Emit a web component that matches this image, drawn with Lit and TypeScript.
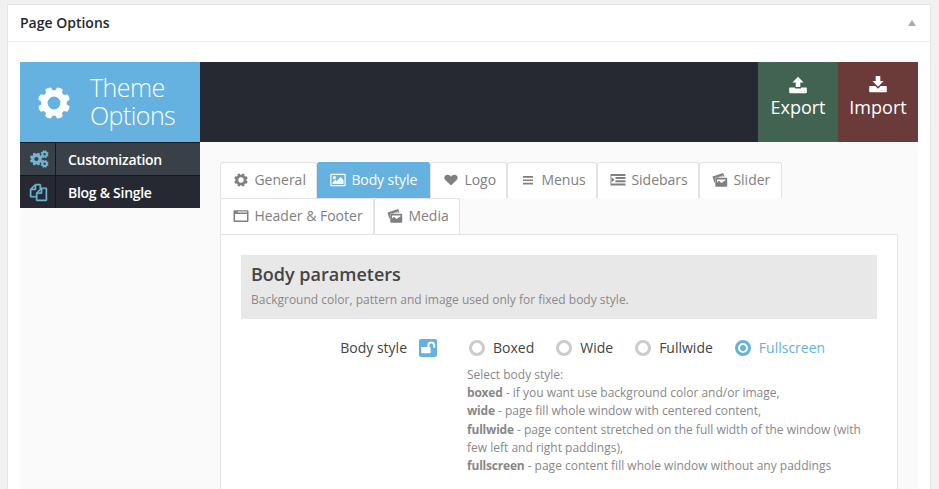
import { LitElement, html, svg, css, type SVGTemplateResult } from "lit";
import { customElement, property, state } from "lit/decorators.js";
import { classMap } from "lit/directives/class-map.js";

/** Ring-shaped gear outline with eight rounded teeth. */
function gear(cx: number, cy: number, outer: number, root: number, hole: number, teeth = 8): string {
  const step = (Math.PI * 2) / teeth;
  const pt = (r: number, a: number) => `${(cx + r * Math.cos(a)).toFixed(2)} ${(cy + r * Math.sin(a)).toFixed(2)}`;
  let d = "";
  for (let i = 0; i < teeth; i++) {
    const a = (i + 0.5) * step;
    d += `${i ? "L" : "M"}${pt(root, a - step * 0.36)}L${pt(outer * 0.97, a - step * 0.24)}`;
    d += `Q${pt(outer * 1.03, a)} ${pt(outer * 0.97, a + step * 0.24)}L${pt(root, a + step * 0.36)}`;
  }
  return `${d}ZM${cx + hole} ${cy}A${hole} ${hole} 0 1 0 ${cx - hole} ${cy}A${hole} ${hole} 0 1 0 ${cx + hole} ${cy}Z`;
}

const icons: Record<string, { box: string; body: SVGTemplateResult }> = {
  cog: { box: "0 0 32 32", body: svg`<path fill-rule="evenodd" d=${gear(16, 16, 16.4, 12.8, 6.4)} />` },
  cogSmall: { box: "0 0 16 16", body: svg`<path fill-rule="evenodd" d=${gear(8, 8, 6.9, 5.4, 2.7)} />` },
  cogs: {
    box: "0 0 18 18",
    body: svg`<path fill-rule="evenodd" d=${gear(6.4, 9, 6.7, 5.2, 2.1)} />
      <path fill-rule="evenodd" d=${gear(14.6, 4.2, 4.1, 3.1, 1.2)} />
      <path fill-rule="evenodd" d=${gear(14.6, 13.8, 4.1, 3.1, 1.2)} />`,
  },
  files: {
    box: "0 0 1792 1792",
    body: svg`<path stroke="currentColor" stroke-width="50" d="M1696 384q40 0 68 28t28 68v1216q0 40-28 68t-68 28h-960q-40 0-68-28t-28-68v-288h-544q-40 0-68-28t-28-68v-672q0-40 20-88t48-76l408-408q28-28 76-48t88-20h416q40 0 68 28t28 68v328q68-40 128-40h416zm-544 213l-299 299h299v-299zm-640-384l-299 299h299v-299zm196 647l316-316v-416h-384v416q0 40-28 68t-68 28h-416v640h512v-256q0-40 20-88t48-76zm956 804v-1152h-384v416q0 40-28 68t-68 28h-416v640h896z" />`,
  },
  upload: {
    box: "0 0 18 18",
    body: svg`<path d="M9 .7 14.6 6.4H11.3V11H6.7V6.4H3.4Z" />
      <path fill-rule="evenodd" d="M1 11.4H5.6Q6.2 12.6 7.3 12.6H10.7Q11.8 12.6 12.4 11.4H17Q17.8 11.4 17.8 12.2V16.5Q17.8 17.3 17 17.3H1Q.2 17.3 .2 16.5V12.2Q.2 11.4 1 11.4ZM12.4 15V15.6H13.1V15ZM15 15V15.6H15.7V15Z" />`,
  },
  download: {
    box: "0 0 18 18",
    body: svg`<path d="M6.7 0H11.3V4.9H14.6L9 10.7 3.4 4.9H6.7Z" />
      <path fill-rule="evenodd" d="M1 10.1H6.3L9 12.7 11.7 10.1H17Q17.8 10.1 17.8 10.9V15.4Q17.8 16.2 17 16.2H1Q.2 16.2 .2 15.4V10.9Q.2 10.1 1 10.1ZM12.4 13.9V14.5H13.1V13.9ZM15 13.9V14.5H15.7V13.9Z" />`,
  },
  picture: {
    box: "0 0 16 16",
    body: svg`<path fill-rule="evenodd" d="M1.3 1.8H14.7Q15.7 1.8 15.7 2.8V13.2Q15.7 14.2 14.7 14.2H1.3Q.3 14.2 .3 13.2V2.8Q.3 1.8 1.3 1.8ZM1.5 3V13H14.5V3Z" />
      <circle cx="4.4" cy="5.7" r="1.6" /><path d="M2.6 12V10.2L5.1 7.8 6.7 9.3 10.5 5 13.5 8.2V12Z" />`,
  },
  heart: {
    box: "0 0 16 16",
    body: svg`<path d="M8 13.6 2.3 8.1C.4 6 1.5 2.9 4.3 2.7 6 2.6 7.3 3.5 8 4.7 8.7 3.5 10 2.6 11.7 2.7 14.5 2.9 15.6 6 13.7 8.1Z" />`,
  },
  menu: { box: "0 0 16 16", body: svg`<path d="M3 4H13V5.7H3ZM3 7.4H13V9.1H3ZM3 10.8H13V12.5H3Z" />` },
  indent: {
    box: "0 0 16 16",
    body: svg`<path d="M.5 2H15.5V4H.5ZM5.5 5.1H15.5V7.1H5.5ZM5.5 8.3H15.5V10.3H5.5ZM.5 11.5H15.5V13.5H.5ZM.5 4H1.3V11.5H.5ZM1.6 5.2 4.6 7.7 1.6 10.2Z" />`,
  },
  photos: {
    box: "0 0 16 16",
    body: svg`<path d="M.5 4.5 11.3 1 12.4 4.6H11L10.3 2.9 5 4.6 4 5.6 2.9 6.2 3 8.1V11.3L2 9.4Z" />
      <path d="M5 3.6 10 2.2 10.6 4.4H7.6L6.9 5.6H4Z" />
      <path fill-rule="evenodd" d="M4 5.8H14.5Q15.2 5.8 15.2 6.5V13.9Q15.2 14.7 14.5 14.7H4Q3.3 14.7 3.3 13.9V6.5Q3.3 5.8 4 5.8ZM5 7.4V10.4L7 8.8 9.4 11 13.5 8.3V7.4Z" />`,
  },
  window: {
    box: "0 0 16 16",
    body: svg`<path fill-rule="evenodd" d="M1.5 2.2H14.5Q15.5 2.2 15.5 3.2V13Q15.5 14 14.5 14H1.5Q.5 14 .5 13V3.2Q.5 2.2 1.5 2.2ZM2 5.9V12.6H14V5.9ZM4.8 3.5V4.4H13.9V3.5Z" />`,
  },
  unlock: {
    box: "0 0 18 18",
    body: svg`<rect x="2.2" y="8" width="9.4" height="6.2" rx=".7" />
      <path fill="none" stroke="currentColor" stroke-width="1.9" d="M9.4 8.4V6.4A2.9 2.9 0 0 1 15.2 6.4V8.7" />`,
  },
};

@customElement("ui-icon")
class UiIcon extends LitElement {
  @property() name = "cog";

  static styles = css`
    :host { display: block; flex: none; width: 16px; height: 16px; }
    svg { display: block; width: 100%; height: 100%; fill: currentColor; overflow: visible; }
  `;

  render() {
    const icon = icons[this.name];
    return html`<svg viewBox=${icon.box} aria-hidden="true">${icon.body}</svg>`;
  }
}

interface Tab { label: string; icon: string; size: string }

const tabs: Tab[] = [
  { label: "General", icon: "cogSmall", size: "general" },
  { label: "Body style", icon: "picture", size: "body" },
  { label: "Logo", icon: "heart", size: "logo" },
  { label: "Menus", icon: "menu", size: "menus" },
  { label: "Sidebars", icon: "indent", size: "sidebars" },
  { label: "Slider", icon: "photos", size: "slider" },
  { label: "Header & Footer", icon: "window", size: "header" },
  { label: "Media", icon: "photos", size: "media" },
];

const choices = ["Boxed", "Wide", "Fullwide", "Fullscreen"];

@customElement("app-root")
class AppRoot extends LitElement {
  @state() tab = "Body style";
  @state() choice = "Fullscreen";

  static styles = css`
    :host {
      display: block; box-sizing: border-box; height: 489px; overflow: hidden;
      padding: 4px 8px 0 7px; background: #f1f1f1; color: #444;
      font-family: "Open Sans", sans-serif;
    }
    * { box-sizing: border-box; }
    .box { height: 600px; background: #fff; border: 1px solid #e5e5e5; }
    .head {
      display: flex; justify-content: space-between; align-items: center; height: 37px;
      padding: 0 14px 0 12px; border-bottom: 1px solid #eee;
      font-size: 14px; font-weight: 600; line-height: 36px; color: #23282d;
    }
    .toggle { width: 0; height: 0; border: 4px solid transparent; border-top: 0; border-bottom: 6px solid #aaa; }
    .options { margin: 20px 12px 0; height: 560px; background: #fafafa; }
    .bar { display: flex; height: 80px; background: #262932; color: #fff; }
    .brand { display: flex; align-items: center; width: 180px; padding: 2px 0 0 18px; background: #65b1e0; }
    .brand ui-icon { width: 32px; height: 32px; }
    .title { margin: -4px 0 0 20px; font-size: 25px; line-height: 28px; font-weight: 300; letter-spacing: -.55px; }
    .spacer { flex: 1; }
    .action {
      display: flex; flex-direction: column; align-items: center; width: 80px;
      padding-top: 14px; font-size: 18px; line-height: 24px;
    }
    .action ui-icon { width: 18px; height: 18px; margin-bottom: 1px; }
    .action.export { background: #426352; }
    .action.import { background: #6a3b39; }
    .main { display: flex; align-items: flex-start; }
    .nav { width: 180px; }
    .entry {
      display: flex; height: 33px; border-top: 1px solid #16181d; background: #262932;
      color: #fff; font-size: 14px; font-weight: 600; line-height: 34px; letter-spacing: -.28px;
    }
    .entry.current { background: #3a4047; }
    .entry .mark {
      display: flex; align-items: center; width: 36px; padding-left: 10px;
      border-right: 1px solid #16181d; color: #6fb6d6;
    }
    .entry .mark ui-icon { width: 18px; height: 18px; }
    .entry .mark ui-icon[name="files"] { width: 17px; height: 17px; }
    .entry .name { padding-left: 12px; }
    .content { width: 678px; margin: 20px 0 0 20px; }
    .tabs { display: flex; flex-wrap: wrap; width: 600px; }
    .tab {
      display: flex; height: 36px; padding: 0 0 0 12px; border: 1px solid #e3e3e3; border-bottom: 0;
      border-radius: 3px 3px 0 0; background: #fff; color: #808080;
      font-size: 14px; line-height: 33px; white-space: nowrap;
    }
    .tab ui-icon { margin: 9px 5.4px 0 0; }
    .tab.current { background: #65b1e0; border-color: #65b1e0; color: #fff; font-weight: 500; letter-spacing: -.1px; }
    .general { width: 97px; }
    .body { width: 113px; }
    .logo { width: 77px; }
    .menus { width: 90px; }
    .sidebars { width: 102px; }
    .slider { width: 83px; }
    .header { width: 154px; }
    .media { width: 86px; }
    .pane { height: 420px; padding: 20px; background: #fff; border: 1px solid #e3e3e3; }
    .info { height: 64px; padding: 7px 10px 0; background: #e8e8e8; }
    .info h2 { margin: 0; font-size: 18px; line-height: 24px; font-weight: 600; color: #444; }
    .info p { margin: 5px 0 0; font-size: 12px; line-height: 18px; color: #888; }
    .field { display: flex; margin-top: 20px; }
    .caption { width: 166px; text-align: right; font-size: 14px; line-height: 18px; }
    .lock { width: 18px; height: 18px; margin-left: 12px; border-radius: 2px; background: #65b1e0; color: #fff; }
    .lock ui-icon { width: 18px; height: 18px; }
    .value { margin-left: 30px; width: 400px; }
    .radios { display: flex; padding-left: 2px; gap: 22px; }
    .radio { display: flex; align-items: center; font-size: 14px; line-height: 18px; }
    .dot { width: 16px; height: 16px; margin-right: 8px; border: 3px solid #ccc; border-radius: 50%; }
    .radio.on { color: #65b1e0; }
    .radio.on .dot { border-color: #65b1e0; background: radial-gradient(circle, #65b1e0 2.6px, #fff 3.4px); }
    .help { margin-top: 9px; font-size: 12px; line-height: 18.2px; color: #888; }
    .help b { font-weight: 700; letter-spacing: -.2px; }
  `;

  render() {
    return html`
      <section class="box">
        <header class="head">Page Options<span class="toggle"></span></header>
        <div class="options">
          <div class="bar">
            <div class="brand">
              <ui-icon name="cog"></ui-icon>
              <div class="title">Theme<br />Options</div>
            </div>
            <div class="spacer"></div>
            <div class="action export"><ui-icon name="upload"></ui-icon>Export</div>
            <div class="action import"><ui-icon name="download"></ui-icon>Import</div>
          </div>
          <div class="main">
            <nav class="nav">
              <div class="entry current">
                <span class="mark"><ui-icon name="cogs"></ui-icon></span><span class="name">Customization</span>
              </div>
              <div class="entry">
                <span class="mark"><ui-icon name="files"></ui-icon></span><span class="name">Blog &amp; Single</span>
              </div>
            </nav>
            <div class="content">
              <div class="tabs">
                ${tabs.map((t) => html`
                  <div class=${classMap({ tab: true, current: t.label === this.tab, [t.size]: true })}
                    @click=${() => (this.tab = t.label)}>
                    <ui-icon name=${t.icon}></ui-icon><span>${t.label}</span>
                  </div>`)}
              </div>
              <div class="pane">
                <div class="info">
                  <h2>Body parameters</h2>
                  <p>Background color, pattern and image used only for fixed body style.</p>
                </div>
                <div class="field">
                  <div class="caption">Body style</div>
                  <div class="lock"><ui-icon name="unlock"></ui-icon></div>
                  <div class="value">
                    <div class="radios">
                      ${choices.map((c) => html`
                        <div class=${classMap({ radio: true, on: c === this.choice })} @click=${() => (this.choice = c)}>
                          <span class="dot"></span><span>${c}</span>
                        </div>`)}
                    </div>
                    <div class="help">
                      Select body style:<br />
                      <b>boxed</b> - if you want use background color and/or image,<br />
                      <b>wide</b> - page fill whole window with centered content,<br />
                      <b>fullwide</b> - page content stretched on the full width of the window (with few left and right paddings),<br />
                      <b>fullscreen</b> - page content fill whole window without any paddings
                    </div>
                  </div>
                </div>
              </div>
            </div>
          </div>
        </div>
      </section>
    `;
  }
}
